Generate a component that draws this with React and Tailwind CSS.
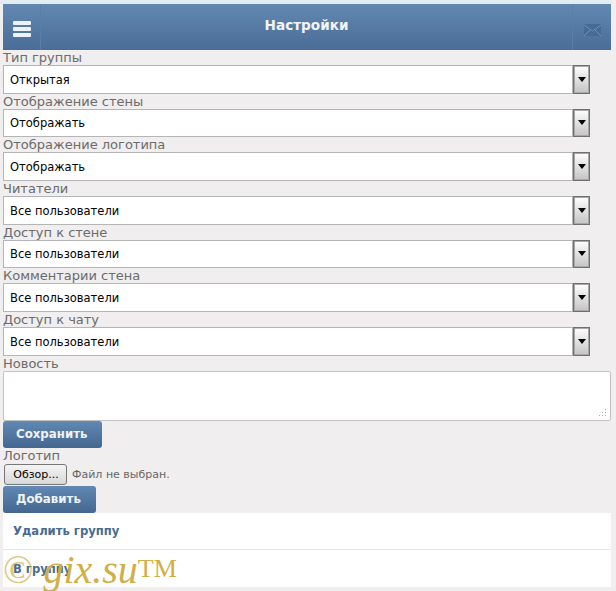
import React from 'react';

const fields = [
  { label: 'Тип группы', value: 'Открытая' },
  { label: 'Отображение стены', value: 'Отображать' },
  { label: 'Отображение логотипа', value: 'Отображать' },
  { label: 'Читатели', value: 'Все пользователи' },
  { label: 'Доступ к стене', value: 'Все пользователи' },
  { label: 'Комментарии стена', value: 'Все пользователи' },
  { label: 'Доступ к чату', value: 'Все пользователи' },
];

const Label = ({ children }) => (
  <div className="h-[15px] pl-[3px] text-[13px] leading-[15px] text-[#6b6b6b]">{children}</div>
);

const SelectRow = ({ value }) => (
  <div className="ml-[3px] mr-[26px] flex h-[28.67px] items-stretch">
    <div className="flex flex-1 items-center border border-[#b5b5b5] bg-white pl-[6px] pt-[2px] text-[11.5px] text-black">
      {value}
    </div>
    <div className="flex w-[17px] items-center justify-center border border-[#6f6f6f] bg-gradient-to-b from-white to-[#c4c4c4] shadow-[inset_0_0_0_1px_#a8a8a8]">
      <div className="h-0 w-0 border-x-[4.5px] border-t-[5px] border-x-transparent border-t-black" />
    </div>
  </div>
);

const BlueButton = ({ children, width }) => (
  <button className={`ml-[3px] block h-[27px] ${width} rounded-[3px] bg-gradient-to-b from-[#6089b4] to-[#44678f] pl-[13px] pt-[1px] text-left text-[11.8px] font-bold text-[#f0f3f6]`}>
    {children}
  </button>
);

export default function App() {
  return (
    <div className="relative h-[591px] w-[616px] overflow-hidden bg-[#f0eeee] font-['DejaVu_Sans',sans-serif]">
      <div className="mr-[5px] h-[4px] bg-[#e3ebf3]" />
      <header className="ml-[3px] mr-[5px] flex h-[46px] items-center bg-gradient-to-b from-[#6288b2] to-[#4a6d97]">
        <div className="flex h-full w-[38px] items-center justify-center border-r border-[#5a7ea7] pt-[4px]">
          <div className="flex w-[18px] flex-col gap-[2px]">
            <span className="h-[4px] rounded-[1px] bg-[#eef2f6]" />
            <span className="h-[4px] rounded-[1px] bg-[#eef2f6]" />
            <span className="h-[4px] rounded-[1px] bg-[#eef2f6]" />
          </div>
        </div>
        <h1 className="-mt-[4px] flex-1 text-center text-[13.6px] font-bold text-[#f2f5f8]">Настройки</h1>
        <div className="flex h-full w-[39px] items-center justify-center border-l border-[#5a7ea7] pt-[6px]">
          <svg width="17" height="13" viewBox="0 0 17 13" fill="none">
            <rect width="17" height="12" fill="#466b97" />
            <path d="M0 1l8.5 6L17 1M0 12l6-6M17 12l-6-6" stroke="#6d90b8" strokeWidth="1" />
          </svg>
        </div>
      </header>

      {fields.map((f) => (
        <div key={f.label}>
          <Label>{f.label}</Label>
          <SelectRow value={f.value} />
        </div>
      ))}

      <Label>Новость</Label>
      <div className="relative ml-[3px] mr-[5px] h-[50px] rounded-[2px] border border-[#c2c2c2] bg-white">
        <svg className="absolute bottom-[2px] right-[2px]" width="9" height="9" viewBox="0 0 9 9" fill="#aaa">
          <rect x="6" y="0" width="1" height="1" />
          <rect x="3" y="3" width="1" height="1" />
          <rect x="6" y="3" width="1" height="1" />
          <rect x="0" y="6" width="1" height="1" />
          <rect x="3" y="6" width="1" height="1" />
          <rect x="6" y="6" width="1" height="1" />
        </svg>
      </div>
      <BlueButton width="w-[99px]">Сохранить</BlueButton>
      <Label>Логотип</Label>
      <div className="ml-[4px] mt-[1px] mb-[1px] flex h-[21px] items-center gap-[5px] text-[11px] text-[#666]">
        <button className="h-[21px] w-[63px] rounded-[3px] border border-[#777] bg-gradient-to-b from-[#f4f4f4] to-[#d8d8d8] pt-[2px] pl-[1px] text-black">Обзор...</button>
        <span className="pt-[3px]">Файл не выбран.</span>
      </div>
      <BlueButton width="w-[93px]">Добавить</BlueButton>

      <div className="ml-[3px] mr-[5px] text-[11.6px] font-bold text-[#4a6a90]">
        <div className="flex h-[37px] items-center border-b border-[#e6e6e6] bg-white pl-[10px] pt-[3px]">Удалить группу</div>
        <div className="flex h-[37px] items-center bg-white pl-[10px] pt-[3px]">В группу</div>
      </div>

      <div className="absolute left-[3px] top-[550px] whitespace-nowrap text-[40px] italic leading-none text-[#d0ae48] [font-family:'Liberation_Serif',serif]">
        <span className="not-italic opacity-70">©</span> gix.su<span className="relative top-[6px] align-top text-[26px] not-italic">TM</span>
      </div>
    </div>
  );
}
